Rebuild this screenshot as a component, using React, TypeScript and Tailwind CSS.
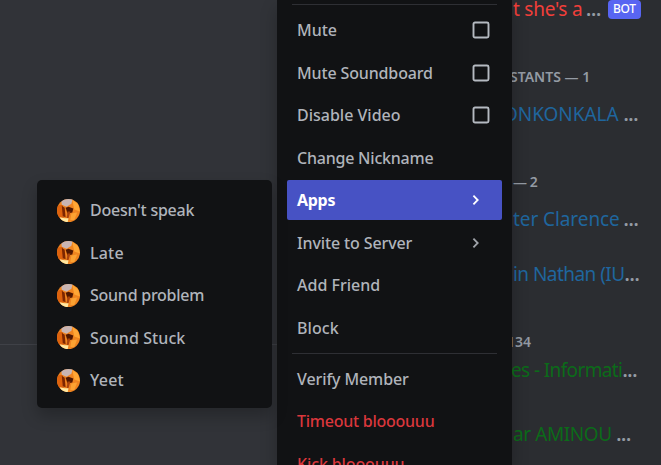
import React from "react";

const menuFont = "font-['Noto_Sans','Open_Sans',sans-serif]";

function Avatar() {
  return (
    <svg viewBox="0 0 24 24" className="h-[23px] w-[23px] shrink-0">
      <defs>
        <clipPath id="disc"><circle cx="12" cy="12" r="12" /></clipPath>
        <filter id="soft"><feGaussianBlur stdDeviation="0.55" /></filter>
      </defs>
      <g clipPath="url(#disc)">
        <rect width="24" height="24" fill="#ef8420" />
        <g filter="url(#soft)">
          <path d="M-2 7 L6 6 L7 24 L-2 24Z" fill="#dd620d" />
          <path d="M4 -2H17L15 5L10 8L5 6Z" fill="#c9b5b3" />
          <path d="M16 1L22 5L24 13L18 11Z" fill="#ffa634" />
          <path d="M5 7L8 9L9 19L6 18Z" fill="#7d2604" />
          <path d="M9 9L12 8L17 10L16 14L11 15Z" fill="#501901" />
          <path d="M11 13L14 13L12 20L10 20Z" fill="#a8420a" />
          <path d="M3 19L8 20L12 20L11 25H5Z" fill="#ffe7a0" />
          <path d="M15 15L21 14L18 22L14 22Z" fill="#fba233" />
        </g>
      </g>
    </svg>
  );
}

function Chevron({ color }: { color: string }) {
  return (
    <svg viewBox="0 0 10 12" className="mr-[9px] h-3 w-2.5" fill="none" stroke={color} strokeWidth="1.8">
      <path d="M2.4 1.7 L6.7 6 L2.4 10.3" />
    </svg>
  );
}

type Item = { label: string; track: string; tone?: string; check?: boolean; arrow?: boolean; active?: boolean };

const upper: Item[] = [
  { label: "Mute", track: "tracking-[0px]", check: true },
  { label: "Mute Soundboard", track: "tracking-[-0.14px]", check: true },
  { label: "Disable Video", track: "tracking-[0px]", check: true },
  { label: "Change Nickname", track: "tracking-[-0.22px]" },
  { label: "Apps", track: "font-bold tracking-[-0.3px]", arrow: true, active: true },
  { label: "Invite to Server", track: "tracking-[-0.12px]", arrow: true },
  { label: "Add Friend", track: "tracking-[0px]" },
  { label: "Block", track: "tracking-[0.1px]" },
];

const lower: Item[] = [
  { label: "Verify Member", track: "tracking-[-0.1px]" },
  { label: "Timeout blooouuu", track: "relative -top-px tracking-[-0.25px]", tone: "text-[#da373c]" },
  { label: "Kick blooouuu", track: "tracking-[-0.12px]", tone: "text-[#da373c]" },
];

const apps: Item[] = [
  { label: "Doesn't speak", track: "tracking-[-0.25px]" },
  { label: "Late", track: "tracking-[0.2px]" },
  { label: "Sound problem", track: "tracking-[-0.25px]" },
  { label: "Sound Stuck", track: "tracking-[0.08px]" },
  { label: "Yeet", track: "tracking-[0.2px]" },
];

function MenuRow({ item }: { item: Item }) {
  const tone = item.active ? "bg-[#4752c4] text-white" : item.tone ?? "text-[#b0b4bb]";
  return (
    <div className={`flex h-10 shrink-0 items-center justify-between rounded-[2px] pl-2.5 pr-3 ${tone}`}>
      <span className={item.track}>{item.label}</span>
      {item.check && (
        <svg viewBox="0 0 18 18" className="h-[18px] w-[18px]" fill="none" stroke="#b5bac1" strokeWidth="1.9">
          <rect x="1.5" y="1.5" width="15" height="15" rx="1.5" />
        </svg>
      )}
      {item.arrow && <Chevron color={item.active ? "#ffffff" : "#a0a4aa"} />}
    </div>
  );
}

type MemberProps = { name: string; track: string; dots?: string; className: string; bot?: boolean };

function Member({ name, track, dots = "", className, bot }: MemberProps) {
  return (
    <div className={`flex h-7 shrink-0 items-center whitespace-pre text-[19px] leading-7 ${className}`}>
      <span className={track}>{name}</span>
      <span className={`font-semibold tracking-[-0.3px] text-[#949ba4] ${dots}`}>...</span>
      {bot && (
        <span className="ml-[7px] flex h-[19px] w-[33px] items-center justify-center rounded-[4px] bg-[#5865f2] text-[12px] font-medium tracking-[-0.3px] text-white">
          BOT
        </span>
      )}
    </div>
  );
}

function Heading({ text, className }: { text: string; className: string }) {
  return (
    <div className={`flex h-5 shrink-0 items-center whitespace-pre text-[14px] leading-5 text-[#949ba4] ${className}`}>
      {text}
    </div>
  );
}

export default function App() {
  return (
    <div className={`relative flex h-[465px] w-[661px] overflow-hidden bg-[#313338] text-[16px] font-medium ${menuFont}`}>
      <main className="flex w-[512px] shrink-0 flex-col">
        <div className="h-[345px] w-[277px] shrink-0 border-b border-[#3f4147]" />
      </main>
      <aside className="flex h-full w-[149px] flex-col overflow-hidden bg-[#2b2d31] font-normal">
        <Member name="t she's a " track="tracking-[-0.25px]" dots="-ml-px" className="-mt-[5px] ml-px text-[#f23f3a]" bot />
        <Heading text="STANTS — 1" className="-ml-[2px] mt-[44px] font-semibold tracking-[0px]" />
        <Member name="ONKONKALA " track="tracking-[-0.05px]" className="-ml-[9px] mt-[13px] text-[#1f669e]" />
        <Heading text="— 2" className="ml-px mt-[44px] font-semibold tracking-[-0.5px]" />
        <Member name="ter Clarence " track="tracking-[-0.08px]" dots="-ml-px" className="ml-px mt-[13px] text-[#1f669e]" />
        <Member name="in Nathan (IU" track="tracking-[-0.55px]" className="ml-px mt-[27px] text-[#1f669e]" />
        <Heading text="134" className="-ml-[5px] mt-[44px] font-semibold tracking-[0px]" />
        <Member name="es - Informati" track="tracking-[-0.62px]" className="-ml-px mt-[4px] text-[#0b6b19]" />
        <Member name="ar AMINOU " track="tracking-[-0.42px]" className="ml-px mt-[36px] text-[#0b6b19]" />
      </aside>

      <div className="absolute left-[277px] top-0 flex h-[465px] w-[235px] flex-col overflow-hidden bg-[#111214] px-2.5 pt-1 shadow-[0_8px_16px_rgba(0,0,0,0.24)]">
        <div className="mx-[5px] h-px shrink-0 bg-[#2e2f34]" />
        <div className="mt-[5px] flex flex-col gap-[2.5px]">
          {upper.map((item) => <MenuRow key={item.label} item={item} />)}
        </div>
        <div className="mx-[5px] mt-[5.5px] h-px shrink-0 bg-[#2e2f34]" />
        <div className="mt-[5px] flex flex-col gap-[2.5px]">
          {lower.map((item) => <MenuRow key={item.label} item={item} />)}
        </div>
      </div>

      <div className="absolute left-[37px] top-[180px] flex h-[228px] w-[235px] flex-col gap-[2.5px] rounded-[5px] bg-[#111214] py-2.5 pl-5 text-[#b0b4bb] shadow-[0_8px_16px_rgba(0,0,0,0.24)]">
        {apps.map((item) => (
          <div key={item.label} className="flex h-10 shrink-0 items-center gap-2.5">
            <Avatar />
            <span className={item.track}>{item.label}</span>
          </div>
        ))}
      </div>
    </div>
  );
}
